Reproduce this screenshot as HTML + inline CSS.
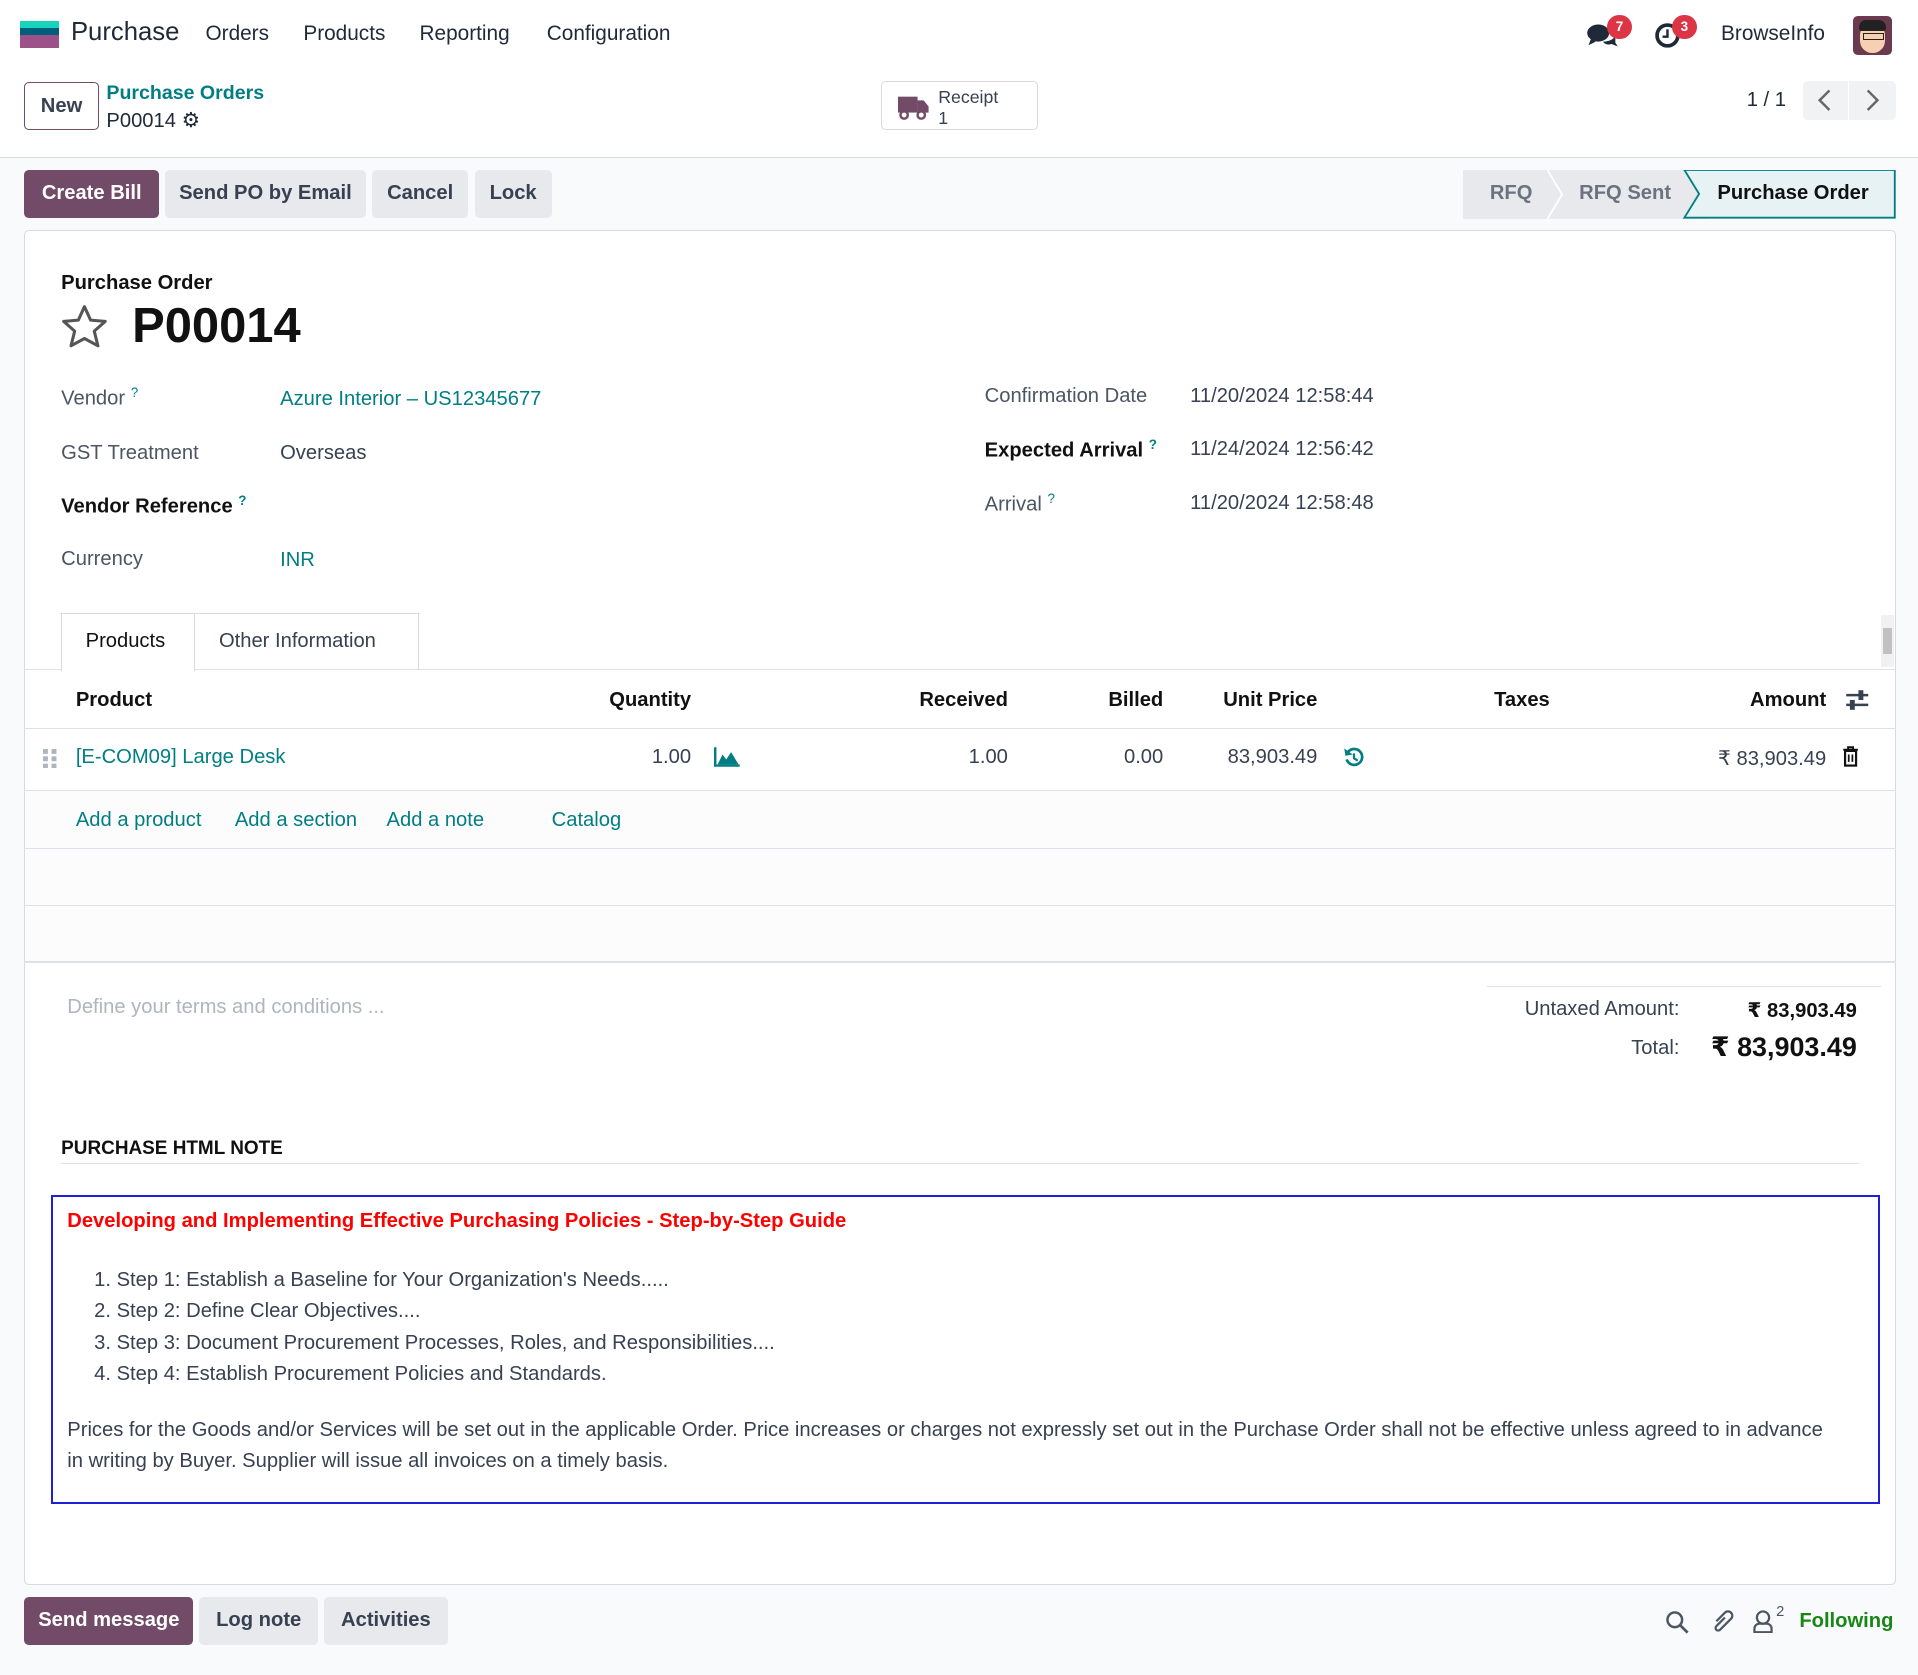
<!DOCTYPE html>
<html><head><meta charset="utf-8"><style>
html{zoom:1.2232}
body{margin:0;width:1568px;height:1369px;position:relative;overflow:hidden;background:#f9fafb;font-family:"Liberation Sans","DejaVu Sans",sans-serif;font-size:16px;color:#374151}
.a{position:absolute;white-space:nowrap}
.t{color:#017e84}
.b{font-weight:bold}
.btn{position:absolute;height:39px;line-height:39px;border-radius:4px;background:#e7e9ed;color:#374151;font-weight:bold;font-size:16.5px;text-align:center}
.pr{background:#714b67;color:#fff}
.lbl{color:#4b5563;font-size:16.5px}
.v{font-size:16.5px;color:#374151}
.r{text-align:right}
.hl{position:absolute;height:1px;background:#dee2e6}
sup{color:#017e84;font-size:11px}
</style></head><body>
<div class="a" style="left:0;top:0;width:1568px;height:56px;background:#fff"></div>
<div class="a" style="left:16px;top:17px;width:32px;height:6px;background:#1ad3bb"></div>
<div class="a" style="left:16px;top:23px;width:32px;height:6px;background:#005e7a"></div>
<div class="a" style="left:16px;top:29px;width:32px;height:10px;background:#9c5289"></div>
<div class="a" style="left:58px;top:15px;font-size:21px;color:#1f2937">Purchase</div>
<div class="a" style="left:168px;top:18px;font-size:17px;color:#1f2937">Orders</div>
<div class="a" style="left:248px;top:18px;font-size:17px;color:#1f2937">Products</div>
<div class="a" style="left:343px;top:18px;font-size:17px;color:#1f2937">Reporting</div>
<div class="a" style="left:447px;top:18px;font-size:17px;color:#1f2937">Configuration</div>
<svg class="a" style="left:1297px;top:18px" width="26" height="22" viewBox="0 0 26 22"><ellipse cx="10" cy="9" rx="9" ry="7" fill="#1f2937"/><path d="M4 14l-2 5 6-3z" fill="#1f2937"/><path d="M14 16c5 0 9-2 10-5v6l2 3-5-2c-3 1-6 0-7-2z" fill="#1f2937"/></svg>
<div class="a" style="left:1314px;top:12px;width:20px;height:20px;border-radius:10px;background:#dc3545;color:#fff;font-size:11px;font-weight:bold;text-align:center;line-height:20px">7</div>
<svg class="a" style="left:1352px;top:18px" width="22" height="22"><circle cx="11" cy="11" r="8.5" fill="none" stroke="#1f2937" stroke-width="3"/><path d="M11 6v6h-4" stroke="#1f2937" stroke-width="2" fill="none"/></svg>
<div class="a" style="left:1367px;top:12px;width:20px;height:20px;border-radius:10px;background:#dc3545;color:#fff;font-size:11px;font-weight:bold;text-align:center;line-height:20px">3</div>
<div class="a" style="left:1407px;top:18px;font-size:17px;color:#1f2937">BrowseInfo</div>
<div class="a" style="left:1515px;top:13px;width:32px;height:32px;border-radius:4px;background:#6b3a4f;overflow:hidden"><div style="position:absolute;left:6px;top:6px;width:20px;height:24px;border-radius:10px;background:#f6d0b0"></div><div style="position:absolute;left:5px;top:3px;width:22px;height:9px;border-radius:6px 6px 2px 2px;background:#222"></div><div style="position:absolute;left:8px;top:14px;width:16px;height:4px;border:1px solid #222"></div></div>
<div class="a" style="left:0;top:56px;width:1568px;height:72px;background:#fff;border-bottom:1px solid #d8dadd"></div>
<div class="a" style="left:20px;top:67px;width:59px;height:38px;border:1px solid #714b67;border-radius:4px;background:#fff;color:#374151;font-weight:bold;font-size:16.5px;text-align:center;line-height:38px">New</div>
<div class="a t b" style="left:87px;top:67px;font-size:16px">Purchase Orders</div>
<div class="a" style="left:87px;top:88px;font-size:16.5px;color:#1f2937">P00014 <span style="font-size:17px">⚙</span></div>
<div class="a" style="left:720px;top:66px;width:127px;height:39px;border:1px solid #d8dadd;border-radius:4px;background:#fff"></div>
<svg class="a" style="left:734px;top:76px" width="26" height="22"><rect x="0" y="3" width="16" height="13" fill="#714b67"/><path d="M16 6h5l4 5v5h-9z" fill="#714b67"/><circle cx="5" cy="18" r="3" fill="#fff" stroke="#714b67" stroke-width="2"/><circle cx="19" cy="18" r="3" fill="#fff" stroke="#714b67" stroke-width="2"/></svg>
<div class="a" style="left:767px;top:71px;font-size:14.5px;color:#374151;line-height:17px">Receipt<br>1</div>
<div class="a" style="left:1428px;top:73px;font-size:16.5px;color:#1f2937">1 / 1</div>
<div class="a" style="left:1474px;top:66px;width:37px;height:32px;background:#f1f2f4;border-radius:4px 0 0 4px"></div>
<div class="a" style="left:1512px;top:66px;width:38px;height:32px;background:#f1f2f4;border-radius:0 4px 4px 0"></div>
<svg class="a" style="left:1485px;top:72px" width="14" height="20"><path d="M11 2L3 10l8 8" fill="none" stroke="#666" stroke-width="2"/></svg>
<svg class="a" style="left:1524px;top:72px" width="14" height="20"><path d="M3 2l8 8-8 8" fill="none" stroke="#666" stroke-width="2"/></svg>
<div class="btn pr" style="left:20px;top:139px;width:110px">Create Bill</div>
<div class="btn" style="left:135px;top:139px;width:164px">Send PO by Email</div>
<div class="btn" style="left:304px;top:139px;width:79px">Cancel</div>
<div class="btn" style="left:388px;top:139px;width:63px">Lock</div>
<svg class="a" style="left:1196px;top:139px" width="355" height="40"><rect x="0" y="0" width="200" height="40" fill="#e7e9ed"/><path d="M0 0h69l12 20-12 20H0z" fill="#e7e9ed"/><path d="M69 0h112l12 20-12 20H69l12-20z" fill="#e7e9ed"/><path d="M69 0l12 20-12 20" fill="none" stroke="#fff" stroke-width="1.5"/><path d="M181 0h172v39H181l12-19.5z" fill="#e6f2f3" stroke="#017e84" stroke-width="1.5"/></svg>
<div class="a b" style="left:1218px;top:149px;font-size:16.5px;color:#6b7280">RFQ</div>
<div class="a b" style="left:1291px;top:149px;font-size:16.5px;color:#6b7280">RFQ Sent</div>
<div class="a b" style="left:1404px;top:149px;font-size:16.5px;color:#111">Purchase Order</div>
<div class="a" style="left:20px;top:188px;width:1528px;height:1106px;background:#fff;border:1px solid #d8dadd;border-radius:4px"></div>
<div class="a b" style="left:50px;top:222px;font-size:16.5px;color:#111">Purchase Order</div>
<svg class="a" style="left:49px;top:248px" width="40" height="40"><path d="M20 3l5 11 12 1-9 8 3 12-11-6-11 6 3-12-9-8 12-1z" fill="none" stroke="#555" stroke-width="2.5" stroke-linejoin="round"/></svg>
<div class="a b" style="left:108px;top:244px;font-size:40px;color:#111">P00014</div>
<div class="a lbl" style="left:50px;top:315px">Vendor <sup>?</sup></div>
<div class="a t" style="left:229px;top:317px;font-size:16.5px">Azure Interior – US12345677</div>
<div class="a lbl" style="left:50px;top:361px">GST Treatment</div>
<div class="a v" style="left:229px;top:361px">Overseas</div>
<div class="a b" style="left:50px;top:403px;font-size:16.5px;color:#111">Vendor Reference <sup>?</sup></div>
<div class="a lbl" style="left:50px;top:448px">Currency</div>
<div class="a t" style="left:229px;top:449px;font-size:16.5px">INR</div>
<div class="a lbl" style="left:805px;top:315px">Confirmation Date</div>
<div class="a v" style="left:973px;top:315px">11/20/2024 12:58:44</div>
<div class="a b" style="left:805px;top:357px;font-size:16.5px;color:#111">Expected Arrival <sup>?</sup></div>
<div class="a v" style="left:973px;top:358px">11/24/2024 12:56:42</div>
<div class="a lbl" style="left:805px;top:401px">Arrival <sup>?</sup></div>
<div class="a v" style="left:973px;top:402px">11/20/2024 12:58:48</div>
<div class="hl" style="left:20px;top:547px;width:1530px"></div>
<div class="a" style="left:50px;top:501px;width:108px;height:47px;border:1px solid #d8dadd;border-bottom:none;background:#fff"></div>
<div class="a" style="left:159px;top:501px;width:183px;height:46px;border:1px solid #d8dadd;border-left:none;border-bottom:none"></div>
<div class="a" style="left:70px;top:515px;font-size:16.5px;color:#111">Products</div>
<div class="a" style="left:179px;top:515px;font-size:16.5px;color:#374151">Other Information</div>
<div class="a" style="left:1538px;top:503px;width:10px;height:42px;background:#f1f1f1"></div>
<div class="a" style="left:1539px;top:513px;width:8px;height:22px;background:#c1c1c1"></div>
<div class="a b" style="left:62px;top:563px;font-size:16.5px;color:#111">Product</div>
<div class="a b r" style="left:400px;width:165px;top:563px;font-size:16.5px;color:#111">Quantity</div>
<div class="a b r" style="left:700px;width:124px;top:563px;font-size:16.5px;color:#111">Received</div>
<div class="a b r" style="left:850px;width:101px;top:563px;font-size:16.5px;color:#111">Billed</div>
<div class="a b r" style="left:950px;width:127px;top:563px;font-size:16.5px;color:#111">Unit Price</div>
<div class="a b r" style="left:1150px;width:117px;top:563px;font-size:16.5px;color:#111">Taxes</div>
<div class="a b r" style="left:1350px;width:143px;top:563px;font-size:16.5px;color:#111">Amount</div>
<svg class="a" style="left:1508px;top:563px" width="20" height="18"><path d="M1 5h18M1 13h18" stroke="#374151" stroke-width="2"/><rect x="11" y="1" width="4" height="8" fill="#374151"/><rect x="4" y="9" width="4" height="8" fill="#374151"/></svg>
<div class="hl" style="left:20px;top:595px;width:1530px"></div>
<svg class="a" style="left:35px;top:612px" width="12" height="16"><g fill="#adb5bd"><rect x="0" y="0" width="4" height="4"/><rect x="7" y="0" width="4" height="4"/><rect x="0" y="6" width="4" height="4"/><rect x="7" y="6" width="4" height="4"/><rect x="0" y="12" width="4" height="4"/><rect x="7" y="12" width="4" height="4"/></g></svg>
<div class="a t" style="left:62px;top:610px;font-size:16.5px">[E-COM09] Large Desk</div>
<div class="a r v" style="left:450px;width:115px;top:610px">1.00</div>
<svg class="a" style="left:584px;top:610px" width="22" height="18"><path d="M1 1v15h20" stroke="#017e84" stroke-width="2" fill="none"/><path d="M3 15l4-8 3 4 4-6 6 10z" fill="#017e84"/></svg>
<div class="a r v" style="left:700px;width:124px;top:610px">1.00</div>
<div class="a r v" style="left:850px;width:101px;top:610px">0.00</div>
<div class="a r v" style="left:950px;width:127px;top:610px">83,903.49</div>
<svg class="a" style="left:1098px;top:610px" width="18" height="18"><path d="M4 5a6.5 6.5 0 1 1-1 6" fill="none" stroke="#017e84" stroke-width="2.2"/><path d="M1 2l1 6 6-1z" fill="#017e84"/><path d="M9 6v4l3 2" stroke="#017e84" stroke-width="1.8" fill="none"/></svg>
<div class="a r v" style="left:1350px;width:143px;top:610px">₹ 83,903.49</div>
<svg class="a" style="left:1506px;top:610px" width="14" height="17"><path d="M1 3h12M5 3V1h4v2" stroke="#111" stroke-width="1.6" fill="none"/><rect x="2.5" y="4" width="9" height="12" fill="none" stroke="#111" stroke-width="1.8"/><path d="M5.5 7v6M8.5 7v6" stroke="#111" stroke-width="1.4"/></svg>
<div class="hl" style="left:20px;top:646px;width:1530px"></div>
<div class="a" style="left:21px;top:647px;width:1528px;height:139px;background:#fcfcfc"></div>
<div class="a t" style="left:62px;top:661px;font-size:16.5px">Add a product</div>
<div class="a t" style="left:192px;top:661px;font-size:16.5px">Add a section</div>
<div class="a t" style="left:316px;top:661px;font-size:16.5px">Add a note</div>
<div class="a t" style="left:451px;top:661px;font-size:16.5px">Catalog</div>
<div class="hl" style="left:20px;top:693px;width:1530px"></div>
<div class="hl" style="left:20px;top:740px;width:1530px"></div>
<div class="hl" style="left:20px;top:786px;width:1530px"></div>
<div class="a" style="left:55px;top:814px;font-size:16.5px;color:#adb5bd">Define your terms and conditions ...</div>
<div class="hl" style="left:1216px;top:806px;width:322px"></div>
<div class="a r" style="left:1200px;width:173px;top:816px;font-size:16.5px;color:#374151">Untaxed Amount:</div>
<div class="a r b" style="left:1380px;width:138px;top:816px;font-size:16.5px;color:#111">₹ 83,903.49</div>
<div class="a r" style="left:1200px;width:173px;top:848px;font-size:16.5px;color:#374151">Total:</div>
<div class="a r b" style="left:1360px;width:158px;top:844px;font-size:22px;color:#111">₹ 83,903.49</div>
<div class="a b" style="left:50px;top:930px;font-size:15.5px;color:#111">PURCHASE HTML NOTE</div>
<div class="hl" style="left:50px;top:951px;width:1470px"></div>
<div class="a" style="left:42px;top:977px;width:1492px;height:249px;border:2px solid #1f1fd6"></div>
<div class="a b" style="left:55px;top:989px;font-size:16.5px;color:#f00">Developing and Implementing Effective Purchasing Policies - Step-by-Step Guide</div>
<div class="a v" style="left:77px;top:1034px;line-height:25.7px">1. Step 1: Establish a Baseline for Your Organization's Needs.....<br>2. Step 2: Define Clear Objectives....<br>3. Step 3: Document Procurement Processes, Roles, and Responsibilities....<br>4. Step 4: Establish Procurement Policies and Standards.</div>
<div class="a v" style="left:55px;top:1157px;line-height:25.5px;white-space:normal;width:1450px">Prices for the Goods and/or Services will be set out in the applicable Order. Price increases or charges not expressly set out in the Purchase Order shall not be effective unless agreed to in advance in writing by Buyer. Supplier will issue all invoices on a timely basis.</div>
<div class="btn pr" style="left:20px;top:1306px;width:138px">Send message</div>
<div class="btn" style="left:163px;top:1306px;width:97px">Log note</div>
<div class="btn" style="left:265px;top:1306px;width:101px">Activities</div>
<svg class="a" style="left:1361px;top:1316px" width="20" height="20"><circle cx="8" cy="8" r="6" fill="none" stroke="#4b5563" stroke-width="2"/><path d="M12.5 12.5l6 6" stroke="#4b5563" stroke-width="2.2"/></svg>
<svg class="a" style="left:1397px;top:1315px" width="22" height="22"><path d="M6 10l7-7a3.5 3.5 0 0 1 5 5l-9 9a2 2 0 0 1-3-3l7-7" fill="none" stroke="#4b5563" stroke-width="1.8"/></svg>
<svg class="a" style="left:1432px;top:1315px" width="18" height="20"><circle cx="9" cy="7" r="5" fill="none" stroke="#4b5563" stroke-width="1.8"/><path d="M2 19v-3a4 4 0 0 1 4-4h6a4 4 0 0 1 4 4v3z" fill="none" stroke="#4b5563" stroke-width="1.8"/></svg>
<div class="a" style="left:1452px;top:1311px;font-size:12px;color:#4b5563">2</div>
<div class="a b" style="left:1471px;top:1316px;font-size:16.5px;color:#198717">Following</div>
</body></html>
